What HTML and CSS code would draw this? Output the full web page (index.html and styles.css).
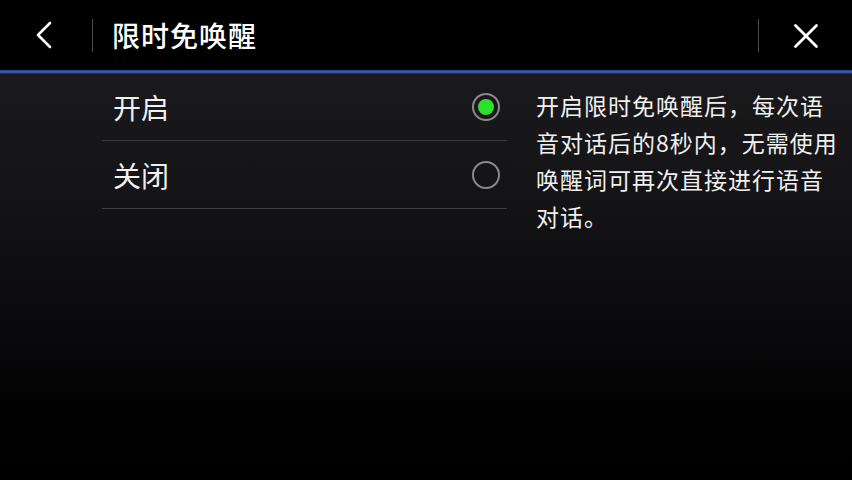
FILE: index.html
```html
<!DOCTYPE html>
<html lang="zh-CN">
<head>
<meta charset="utf-8">
<title>限时免唤醒</title>
<link rel="stylesheet" href="styles.css">
</head>
<body>
<div class="screen">
  <header class="topbar">
    <div class="nav-btn back">
      <svg width="18" height="28" viewBox="0 0 18 28"><polyline points="15,2 3,14 15,26" fill="none" stroke="#fff" stroke-width="2.6" stroke-linecap="round" stroke-linejoin="round"/></svg>
    </div>
    <div class="vdiv"></div>
    <h1 class="title">限时免唤醒</h1>
    <div class="spacer"></div>
    <div class="vdiv"></div>
    <div class="nav-btn close">
      <svg width="26" height="26" viewBox="0 0 26 26"><path d="M2.5 2.5 L23.5 23.5 M23.5 2.5 L2.5 23.5" fill="none" stroke="#fff" stroke-width="2.8" stroke-linecap="round"/></svg>
    </div>
  </header>
  <div class="accent"></div>
  <main class="content">
    <ul class="options">
      <li class="option">
        <span class="label">开启</span>
        <span class="radio checked"></span>
      </li>
      <li class="option">
        <span class="label">关闭</span>
        <span class="radio"></span>
      </li>
    </ul>
    <p class="desc">开启限时免唤醒后，每次语音对话后的8秒内，无需使用唤醒词可再次直接进行语音对话。</p>
  </main>
</div>
</body>
</html>
```

FILE: styles.css
```css
* { box-sizing: border-box; }
html, body { margin: 0; padding: 0; background: #000; }
body {
  width: 852px;
  height: 480px;
  overflow: hidden;
  font-family: "Noto Sans CJK SC", "Noto Sans", sans-serif;
  color: #f2f2f2;
}
.screen {
  width: 852px;
  height: 480px;
  display: flex;
  flex-direction: column;
  background: #000;
}
.topbar {
  height: 70px;
  display: flex;
  align-items: center;
  background: #000;
}
.nav-btn {
  width: 92px;
  height: 70px;
  display: flex;
  align-items: center;
  justify-content: center;
}
.nav-btn.back { padding-right: 4px; }
.nav-btn.close { width: 93px; padding-top: 1px; }
.vdiv {
  width: 1px;
  height: 33px;
  background: #4a4a4a;
}
.title {
  margin: 0 0 0 19px;
  font-size: 28px;
  font-weight: 500;
  color: #fff;
  letter-spacing: 1px;
  line-height: 1;
}
.spacer { flex: 1; }
.accent {
  height: 4px;
  background: linear-gradient(#1d3577 0, #3a5fc0 40%, #2f4fa6 70%, #0d1530 100%);
}
.content {
  flex: 1;
  display: flex;
  align-items: flex-start;
  background: linear-gradient(180deg, #1a1a1d 0%, #141416 30%, #0a0a0c 62%, #020203 82%, #000 100%);
}
.options {
  list-style: none;
  margin: 0 0 0 102px;
  padding: 0;
  width: 405px;
}
.option {
  height: 68px;
  display: flex;
  align-items: center;
  justify-content: space-between;
  padding: 0 7px 0 11px;
  border-bottom: 1px solid #3c3c3e;
}
.option:first-child { height: 67px; }
.label {
  font-size: 28px;
  line-height: 1;
  color: #f0f0f0;
}
.radio {
  width: 28px;
  height: 28px;
  border-radius: 50%;
  border: 2px solid #8a8a8a;
  display: flex;
  align-items: center;
  justify-content: center;
}
.radio.checked::after {
  content: "";
  width: 16px;
  height: 16px;
  border-radius: 50%;
  background: #2ee02e;
}
.desc {
  margin: 13px 0 0 29px;
  width: 306px;
  font-size: 23px;
  line-height: 37px;
  letter-spacing: 1px;
  color: #f0f0f0;
}
```
